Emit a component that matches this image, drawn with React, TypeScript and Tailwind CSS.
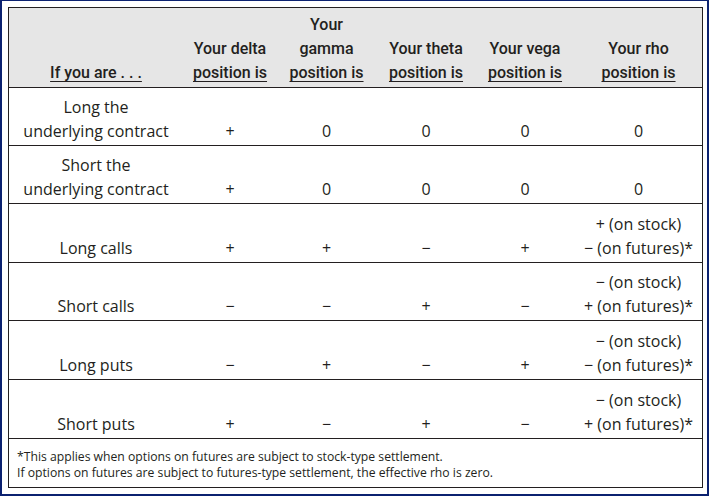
import React from "react";

type Row = {
  label: string[];
  values: string[];
  rho: string[];
};

const rows: Row[] = [
  { label: ["Long the", "underlying contract"], values: ["+", "0", "0", "0"], rho: ["0"] },
  { label: ["Short the", "underlying contract"], values: ["+", "0", "0", "0"], rho: ["0"] },
  { label: ["Long calls"], values: ["+", "+", "\u2212", "+"], rho: ["+ (on stock)", "\u2212 (on futures)*"] },
  { label: ["Short calls"], values: ["\u2212", "\u2212", "+", "\u2212"], rho: ["\u2212 (on stock)", "+ (on futures)*"] },
  { label: ["Long puts"], values: ["\u2212", "+", "\u2212", "+"], rho: ["\u2212 (on stock)", "\u2212 (on futures)*"] },
  { label: ["Short puts"], values: ["+", "\u2212", "+", "\u2212"], rho: ["\u2212 (on stock)", "+ (on futures)*"] },
];

const headers: string[][] = [
  ["If you are . . ."],
  ["Your delta", "position is"],
  ["Your", "gamma", "position is"],
  ["Your theta", "position is"],
  ["Your vega", "position is"],
  ["Your rho", "position is"],
];

const grid = "grid grid-cols-[174px_94px_99px_100px_98px_129px]";
const rowHeights = ["h-[58px]", "h-[58px]", "h-[59px]", "h-[58px]", "h-[59px]", "h-[59px]"];

export default function App() {
  return (
    <div className="w-[710px] h-[496px] bg-white">
      <div className="w-[709px] h-[496px] border-t border-l-2 border-r-2 border-b-2 border-[#0b2170] pl-[6px] pt-[6px] pr-[4px] pb-[4px] text-[#231f20]">
        <div className="border border-[#231f20]">
          {/* header */}
          <div className={`${grid} h-[80px] bg-[#e6e6e6] border-b border-[#231f20] font-['Roboto',sans-serif] text-[16px] leading-[24px] font-medium`}>
            {headers.map((h, i) => (
              <div key={i} className="flex flex-col items-center justify-end pb-[2px] text-center">
                {h.map((line, j) => (
                  <span
                    key={j}
                    className={j === h.length - 1 ? "underline decoration-1 underline-offset-[3px]" : ""}
                  >
                    {line}
                  </span>
                ))}
              </div>
            ))}
          </div>

          {/* body */}
          {rows.map((r, i) => (
            <div
              key={i}
              className={`${grid} ${rowHeights[i]} border-b border-[#231f20] font-['Open_Sans',sans-serif] text-[16px] leading-[24px]`}
            >
              <div className="flex flex-col items-center justify-end pb-[2px] text-center">
                {r.label.map((l, j) => (
                  <span key={j}>{l}</span>
                ))}
              </div>
              {r.values.map((v, j) => (
                <div key={j} className="flex items-end justify-center pb-[2px]">
                  {v}
                </div>
              ))}
              <div className="flex flex-col items-center justify-end pb-[2px] text-center">
                {r.rho.map((l, j) => (
                  <span key={j}>{l}</span>
                ))}
              </div>
            </div>
          ))}

          {/* footnote */}
          <div className="h-[48px] px-[8px] pt-[10px] font-['Open_Sans',sans-serif] text-[12.2px] leading-[16px]">
            <p>*This applies when options on futures are subject to stock-type settlement.</p>
            <p>If options on futures are subject to futures-type settlement, the effective rho is zero.</p>
          </div>
        </div>
      </div>
    </div>
  );
}
